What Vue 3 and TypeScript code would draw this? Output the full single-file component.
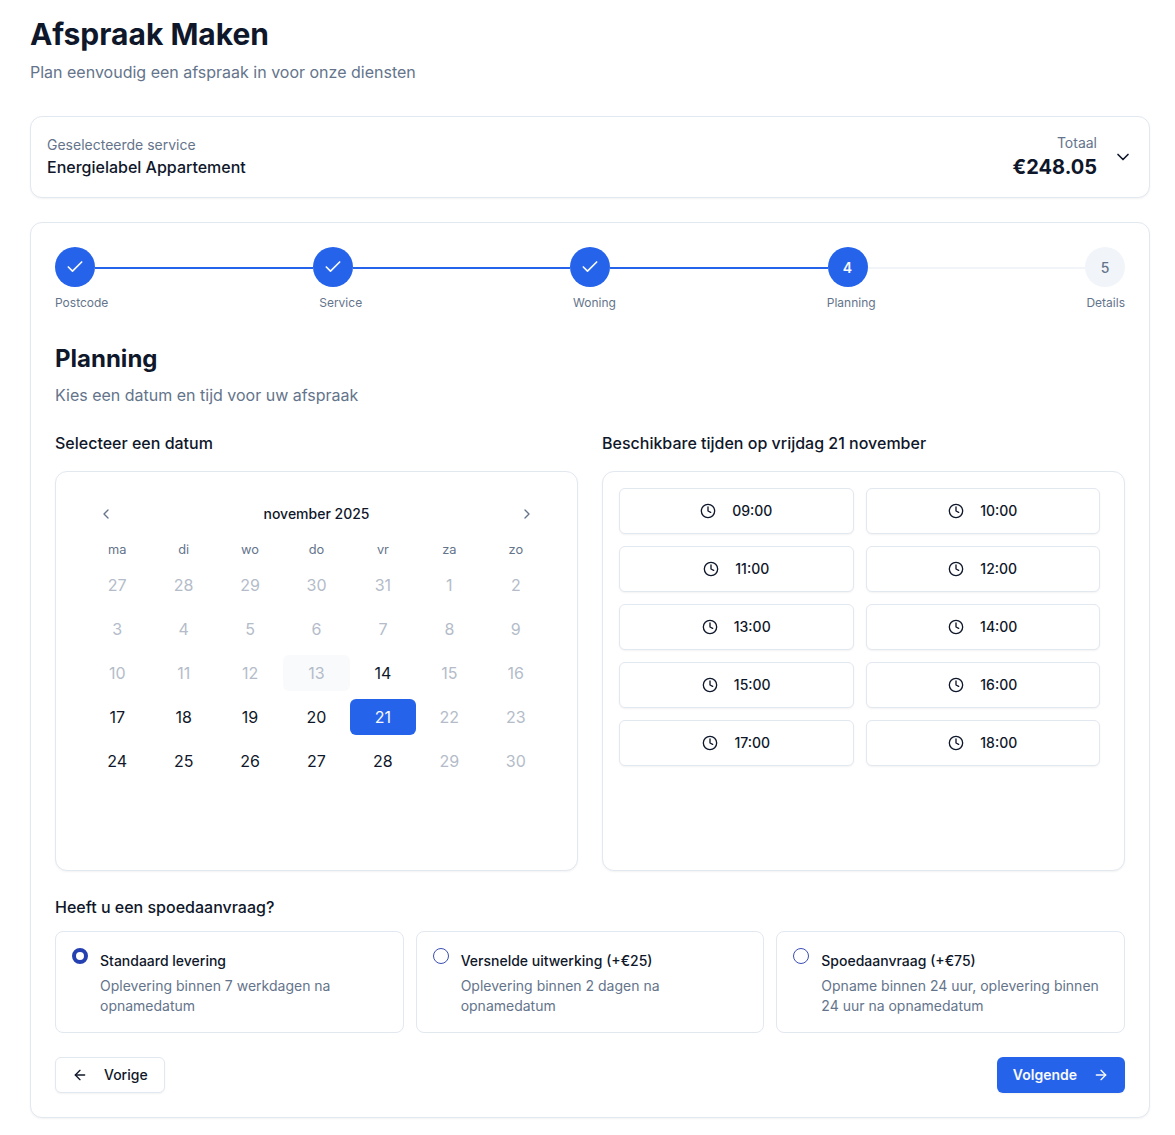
<script setup lang="ts">
import { ref } from 'vue';

const steps = [
  { label: 'Postcode', done: true },
  { label: 'Service', done: true },
  { label: 'Woning', done: true },
  { label: 'Planning', done: false, current: true },
  { label: 'Details', done: false },
];

const weekdays = ['ma', 'di', 'wo', 'do', 'vr', 'za', 'zo'];

// muted = not selectable, active ones are the open days in november
const days = [
  ...[27, 28, 29, 30, 31, 1, 2, 3, 4, 5, 6, 7, 8, 9, 10, 11, 12, 13].map((n) => ({ n, open: false })),
  { n: 14, open: true },
  { n: 15, open: false },
  { n: 16, open: false },
  ...[17, 18, 19, 20, 21].map((n) => ({ n, open: true })),
  { n: 22, open: false },
  { n: 23, open: false },
  ...[24, 25, 26, 27, 28].map((n) => ({ n, open: true })),
  { n: 29, open: false },
  { n: 30, open: false },
];

const times = ['09:00', '10:00', '11:00', '12:00', '13:00', '14:00', '15:00', '16:00', '17:00', '18:00'];

const options = [
  { title: 'Standaard levering', text: 'Oplevering binnen 7 werkdagen na opnamedatum' },
  { title: 'Versnelde uitwerking (+€25)', text: 'Oplevering binnen 2 dagen na opnamedatum' },
  { title: 'Spoedaanvraag (+€75)', text: 'Opname binnen 24 uur, oplevering binnen 24 uur na opnamedatum' },
];

const selectedOption = ref(0);
</script>

<template>
  <div class="page">
    <h1>Afspraak Maken</h1>
    <p class="intro">Plan eenvoudig een afspraak in voor onze diensten</p>

    <section class="card summary">
      <div>
        <div class="summary-label">Geselecteerde service</div>
        <div class="summary-name">Energielabel Appartement</div>
      </div>
      <div class="summary-right">
        <div class="total">
          <div class="total-label">Totaal</div>
          <div class="total-price">€248.05</div>
        </div>
        <svg class="chevron" width="20" height="20" viewBox="0 0 24 24" fill="none" stroke="currentColor" stroke-width="2" stroke-linecap="round" stroke-linejoin="round">
          <path d="m6 9 6 6 6-6" />
        </svg>
      </div>
    </section>

    <section class="card main">
      <div class="stepper">
        <template v-for="(step, i) in steps" :key="step.label">
          <div class="step-dot" :class="{ on: step.done || step.current }">
            <svg v-if="step.done" width="20" height="20" viewBox="0 0 24 24" fill="none" stroke="currentColor" stroke-width="2" stroke-linecap="round" stroke-linejoin="round">
              <path d="M20 6 9 17l-5-5" />
            </svg>
            <span v-else>{{ i + 1 }}</span>
          </div>
          <div v-if="i < steps.length - 1" class="step-line" :class="{ on: step.done }"></div>
        </template>
      </div>
      <div class="step-labels">
        <span v-for="step in steps" :key="step.label">{{ step.label }}</span>
      </div>

      <h2>Planning</h2>
      <p class="sub">Kies een datum en tijd voor uw afspraak</p>

      <div class="columns">
        <div>
          <h3>Selecteer een datum</h3>
          <div class="panel calendar">
            <div class="month">
              <svg width="16" height="16" viewBox="0 0 24 24" fill="none" stroke="currentColor" stroke-width="2" stroke-linecap="round" stroke-linejoin="round">
                <path d="m15 18-6-6 6-6" />
              </svg>
              <span class="month-name">november 2025</span>
              <svg width="16" height="16" viewBox="0 0 24 24" fill="none" stroke="currentColor" stroke-width="2" stroke-linecap="round" stroke-linejoin="round">
                <path d="m9 18 6-6-6-6" />
              </svg>
            </div>
            <div class="weekdays">
              <span v-for="d in weekdays" :key="d">{{ d }}</span>
            </div>
            <div class="days">
              <div
                v-for="(d, i) in days"
                :key="i"
                class="day"
                :class="{ open: d.open, selected: i === 25, today: i === 17 }"
              >
                {{ d.n }}
              </div>
            </div>
          </div>
        </div>

        <div>
          <h3>Beschikbare tijden op vrijdag 21 november</h3>
          <div class="panel slots">
            <button v-for="t in times" :key="t" type="button" class="slot">
              <svg width="16" height="16" viewBox="0 0 24 24" fill="none" stroke="currentColor" stroke-width="2" stroke-linecap="round" stroke-linejoin="round">
                <circle cx="12" cy="12" r="10" />
                <path d="M12 6v6l4 2" />
              </svg>
              {{ t }}
            </button>
          </div>
        </div>
      </div>

      <h3 class="rush-title">Heeft u een spoedaanvraag?</h3>
      <div class="options">
        <label v-for="(o, i) in options" :key="o.title" class="option" @click="selectedOption = i">
          <span class="radio" :class="{ checked: selectedOption === i }"></span>
          <span class="option-body">
            <span class="option-title">{{ o.title }}</span>
            <span class="option-text">{{ o.text }}</span>
          </span>
        </label>
      </div>

      <div class="actions">
        <button type="button" class="btn">
          <svg width="16" height="16" viewBox="0 0 24 24" fill="none" stroke="currentColor" stroke-width="2" stroke-linecap="round" stroke-linejoin="round">
            <path d="m12 19-7-7 7-7" />
            <path d="M19 12H5" />
          </svg>
          Vorige
        </button>
        <button type="button" class="btn primary">
          Volgende
          <svg width="16" height="16" viewBox="0 0 24 24" fill="none" stroke="currentColor" stroke-width="2" stroke-linecap="round" stroke-linejoin="round">
            <path d="M5 12h14" />
            <path d="m12 5 7 7-7 7" />
          </svg>
        </button>
      </div>
    </section>
  </div>
</template>

<style>
body {
  background: #fff;
}
</style>

<style scoped>
.page {
  width: 1120px;
  margin-left: 30px;
  padding-top: 16px;
  padding-bottom: 17px;
  font-family: Inter, "Liberation Sans", sans-serif;
  color: #0f172a;
}
h1 {
  margin: 0;
  font-size: 30px;
  line-height: 36px;
  font-weight: 700;
}
.intro {
  margin: 8px 0 32px;
  font-size: 16px;
  line-height: 24px;
  color: #64748b;
}
.card {
  background: #fff;
  border: 1px solid #e2e8f0;
  border-radius: 12px;
  box-shadow: 0 1px 2px rgba(0, 0, 0, 0.05);
}
.summary {
  display: flex;
  justify-content: space-between;
  align-items: center;
  height: 82px;
  box-sizing: border-box;
  padding: 0 16px;
  margin-bottom: 24px;
}
.summary-label {
  font-size: 14px;
  line-height: 20px;
  color: #64748b;
}
.summary-name {
  font-size: 16px;
  line-height: 24px;
  font-weight: 500;
}
.summary-right {
  display: flex;
  align-items: center;
  gap: 16px;
}
.total {
  text-align: right;
}
.total-label {
  font-size: 14px;
  line-height: 20px;
  color: #64748b;
}
.total-price {
  font-size: 20px;
  line-height: 28px;
  font-weight: 700;
}
.chevron {
  display: block;
}
.main {
  padding: 24px;
}
.stepper {
  display: flex;
  align-items: center;
}
.step-dot {
  flex: none;
  width: 40px;
  height: 40px;
  border-radius: 50%;
  display: flex;
  align-items: center;
  justify-content: center;
  background: #f1f5f9;
  color: #64748b;
  font-size: 14px;
  font-weight: 500;
}
.step-dot.on {
  background: #2563eb;
  color: #f8fafc;
  font-weight: 600;
}
.step-line {
  flex: 1;
  height: 2px;
  margin-top: 2px;
  background: #f1f5f9;
}
.step-line.on {
  background: #2563eb;
}
.step-labels {
  display: flex;
  justify-content: space-between;
  margin-top: 8px;
  font-size: 12px;
  line-height: 16px;
  color: #64748b;
}
h2 {
  margin: 32px 0 0;
  font-size: 24px;
  line-height: 32px;
  font-weight: 700;
}
.sub {
  margin: 8px 0 0;
  font-size: 16px;
  line-height: 24px;
  color: #64748b;
}
h3 {
  margin: 0;
  font-size: 16px;
  line-height: 24px;
  font-weight: 500;
}
.columns {
  display: grid;
  grid-template-columns: 1fr 1fr;
  gap: 24px;
  margin-top: 24px;
}
.panel {
  margin-top: 16px;
  height: 400px;
  box-sizing: border-box;
  border: 1px solid #e2e8f0;
  border-radius: 12px;
  background: #fff;
  box-shadow: 0 1px 2px rgba(0, 0, 0, 0.05);
}
.calendar {
  padding: 28px 28px 0;
}
.month {
  display: flex;
  align-items: center;
  justify-content: space-between;
  height: 28px;
  padding: 0 14px;
  font-size: 14px;
  font-weight: 500;
}
.month-name {
  padding-bottom: 2px;
}
.month svg {
  color: #64748b;
}
.weekdays {
  display: grid;
  grid-template-columns: repeat(7, 1fr);
  margin-top: 12px;
  text-align: center;
  font-size: 12.8px;
  line-height: 20px;
  color: #64748b;
}
.days {
  display: grid;
  grid-template-columns: repeat(7, 1fr);
  grid-auto-rows: 36px;
  row-gap: 8px;
  margin-top: 7px;
}
.day {
  display: flex;
  align-items: center;
  justify-content: center;
  border-radius: 6px;
  font-size: 16px;
  color: #b4bcc9;
}
.day.open {
  color: #0f172a;
}
.day.today {
  background: #f8fafc;
}
.day.selected {
  background: #2563eb;
  color: #f8fafc;
}
.slots {
  display: grid;
  grid-template-columns: 234.5px 234.5px;
  grid-auto-rows: 46px;
  gap: 12px;
  align-content: start;
  padding: 16px;
}
.slot {
  display: flex;
  align-items: center;
  justify-content: center;
  gap: 16px;
  background: #fff;
  border: 1px solid #e2e8f0;
  border-radius: 6px;
  box-shadow: 0 1px 2px rgba(0, 0, 0, 0.05);
  font: 500 14px/20px Inter, "Liberation Sans", sans-serif;
  color: #0f172a;
}
.rush-title {
  margin-top: 24px;
}
.options {
  display: grid;
  grid-template-columns: repeat(3, 1fr);
  gap: 12px;
  margin-top: 12px;
}
.option {
  display: flex;
  gap: 12px;
  padding: 16px;
  border: 1px solid #e2e8f0;
  border-radius: 8px;
}
.radio {
  flex: none;
  width: 16px;
  height: 16px;
  box-sizing: border-box;
  border: 1px solid #3b4fb5;
  border-radius: 50%;
  background: #fff;
}
.radio.checked {
  border: 4px solid #2540b0;
}
.option-body {
  display: block;
  padding-top: 3px;
}
.option-title {
  display: block;
  font-size: 14px;
  line-height: 20px;
  font-weight: 500;
  margin-bottom: 5px;
}
.option-text {
  display: block;
  font-size: 14px;
  line-height: 20px;
  color: #64748b;
}
.actions {
  display: flex;
  justify-content: space-between;
  margin-top: 24px;
}
.btn {
  display: flex;
  align-items: center;
  gap: 16px;
  height: 36px;
  padding: 0 16px;
  background: #fff;
  border: 1px solid #e2e8f0;
  border-radius: 6px;
  box-shadow: 0 1px 2px rgba(0, 0, 0, 0.05);
  font: 500 14px/20px Inter, "Liberation Sans", sans-serif;
  color: #0f172a;
}
.btn.primary {
  background: #2563eb;
  border: none;
  color: #f8fafc;
  font-weight: 600;
}
</style>
